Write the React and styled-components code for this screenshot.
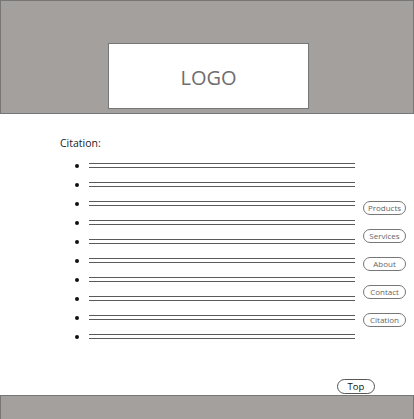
import styled, { createGlobalStyle } from 'styled-components';

const GlobalStyle = createGlobalStyle`
  * { box-sizing: border-box; }
  html, body { margin: 0; padding: 0; background: #fff; }
  body { font-family: "Open Sans", "Noto Sans", Arial, sans-serif; }
`;

const Page = styled.div`
  display: flex;
  flex-direction: column;
  min-height: 100vh;
  width: 414px;
`;

const Header = styled.header`
  height: 114px;
  background: #a4a09e;
  border: 1px solid #767676;
  display: flex;
  justify-content: center;
  align-items: flex-end;
  padding-bottom: 4px;
`;

const LogoBox = styled.div`
  width: 201px;
  height: 66px;
  margin-left: 3px;
  background: #fff;
  border: 1px solid #767676;
  display: flex;
  align-items: center;
  justify-content: center;
  font-size: 20px;
  color: #6e6e6e;
  padding-top: 2px;
`;

const Main = styled.main`
  flex: 1;
  display: flex;
  padding-top: 22px;
`;

const Content = styled.div`
  display: flex;
  flex-direction: column;
`;

const Label = styled.div`
  margin-left: 60px;
  font-size: 10.5px;
  line-height: 15px;
  color: #222;
`;

const List = styled.ul`
  list-style: none;
  margin: 5px 0 0;
  padding: 0 0 0 75px;
`;

const Row = styled.li`
  height: 19px;
  display: flex;
  align-items: center;
`;

const Bullet = styled.span`
  width: 4px;
  height: 4px;
  border-radius: 50%;
  background: #111;
  margin-right: 10px;
`;

const DoubleLine = styled.span`
  width: 266px;
  height: 5px;
  border-top: 1px solid #5a5a5a;
  border-bottom: 1px solid #5a5a5a;
`;

const Nav = styled.nav`
  display: flex;
  flex-direction: column;
  gap: 14px;
  margin-top: 65px;
  margin-left: 8px;
`;

const Pill = styled.button`
  width: ${(p) => p.$w || 43}px;
  height: ${(p) => p.$h || 14}px;
  padding: 0;
  border: 1px solid ${(p) => (p.$dark ? '#555' : '#777')};
  border-radius: 8px;
  background: #fff;
  font-family: inherit;
  font-size: ${(p) => p.$size || 8}px;
  line-height: 1;
  color: ${(p) => (p.$dark ? '#111' : '#666')};
  display: flex;
  align-items: center;
  justify-content: center;
`;

const TopRow = styled.div`
  display: flex;
  justify-content: flex-end;
  padding-right: 39px;
  margin-bottom: 1px;
`;

const Footer = styled.footer`
  height: 24px;
  background: #a4a09e;
  border: 1px solid #767676;
  border-bottom: none;
`;

const navItems = ['Products', 'Services', 'About', 'Contact', 'Citation'];

export default function App() {
  return (
    <Page>
      <GlobalStyle />
      <Header>
        <LogoBox>LOGO</LogoBox>
      </Header>
      <Main>
        <Content>
          <Label>Citation:</Label>
          <List>
            {Array.from({ length: 10 }).map((_, i) => (
              <Row key={i}>
                <Bullet />
                <DoubleLine />
              </Row>
            ))}
          </List>
        </Content>
        <Nav>
          {navItems.map((item) => (
            <Pill key={item}>{item}</Pill>
          ))}
        </Nav>
      </Main>
      <TopRow>
        <Pill $w={38} $h={15} $size={9.5} $dark>Top</Pill>
      </TopRow>
      <Footer />
    </Page>
  );
}
